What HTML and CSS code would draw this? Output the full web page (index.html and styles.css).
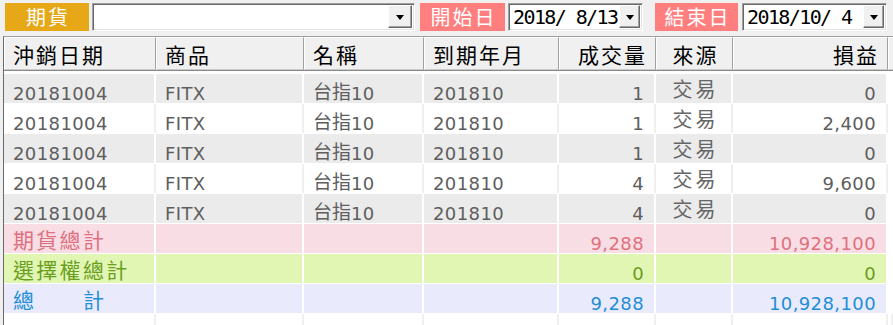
FILE: index.html
```html
<!DOCTYPE html>
<html lang="zh-Hant">
<head>
<meta charset="utf-8">
<title>期貨損益</title>
<link rel="stylesheet" href="styles.css">
</head>
<body>
<div class="toolbar">
  <span class="lbl lbl-orange">期貨</span>
  <div class="combo combo-product"><span class="combo-text"></span><span class="dd"></span></div>
  <span class="lbl lbl-red lbl-start">開始日</span>
  <div class="combo combo-date1"><span class="combo-text">2018/ 8/13</span><span class="dd dd-small"></span></div>
  <span class="lbl lbl-red lbl-end">結束日</span>
  <div class="combo combo-date2"><span class="combo-text">2018/10/ 4</span><span class="dd dd-small"></span></div>
</div>
<div class="grid">
  <div class="row head">
    <div class="c">沖銷日期</div>
    <div class="c">商品</div>
    <div class="c">名稱</div>
    <div class="c">到期年月</div>
    <div class="c r">成交量</div>
    <div class="c m">來源</div>
    <div class="c r">損益</div>
    <div class="c"></div>
  </div>
  <div class="body">
    <div class="row data odd">
      <div class="c">20181004</div><div class="c">FITX</div><div class="c"><span class="cj">台指</span>10</div><div class="c">201810</div><div class="c r">1</div><div class="c m src">交易</div><div class="c r">0</div><div class="c"></div>
    </div>
    <div class="row data even">
      <div class="c">20181004</div><div class="c">FITX</div><div class="c"><span class="cj">台指</span>10</div><div class="c">201810</div><div class="c r">1</div><div class="c m src">交易</div><div class="c r">2,400</div><div class="c"></div>
    </div>
    <div class="row data odd">
      <div class="c">20181004</div><div class="c">FITX</div><div class="c"><span class="cj">台指</span>10</div><div class="c">201810</div><div class="c r">1</div><div class="c m src">交易</div><div class="c r">0</div><div class="c"></div>
    </div>
    <div class="row data even">
      <div class="c">20181004</div><div class="c">FITX</div><div class="c"><span class="cj">台指</span>10</div><div class="c">201810</div><div class="c r">4</div><div class="c m src">交易</div><div class="c r">9,600</div><div class="c"></div>
    </div>
    <div class="row data odd">
      <div class="c">20181004</div><div class="c">FITX</div><div class="c"><span class="cj">台指</span>10</div><div class="c">201810</div><div class="c r">4</div><div class="c m src">交易</div><div class="c r">0</div><div class="c"></div>
    </div>
    <div class="row sum sum-fut">
      <div class="c lc">期貨總計</div><div class="c"></div><div class="c"></div><div class="c"></div><div class="c r">9,288</div><div class="c"></div><div class="c r">10,928,100</div><div class="c"></div>
    </div>
    <div class="row sum sum-opt">
      <div class="c lc">選擇權總計</div><div class="c"></div><div class="c"></div><div class="c"></div><div class="c r">0</div><div class="c"></div><div class="c r">0</div><div class="c"></div>
    </div>
    <div class="row sum sum-all">
      <div class="c lc">總　　計</div><div class="c"></div><div class="c"></div><div class="c"></div><div class="c r">9,288</div><div class="c"></div><div class="c r">10,928,100</div><div class="c"></div>
    </div>
    <div class="row filler">
      <div class="c"></div><div class="c"></div><div class="c"></div><div class="c"></div><div class="c"></div><div class="c"></div><div class="c"></div><div class="c"></div>
    </div>
  </div>
</div>
</body>
</html>
```
FILE: styles.css
```css
html, body {
  margin: 0;
  padding: 0;
}
body {
  width: 893px;
  height: 325px;
  overflow: hidden;
  background: #f0f0f0;
  font-family: "DejaVu Sans", "Noto Sans CJK TC", sans-serif;
}

/* ---------- toolbar ---------- */
.toolbar {
  display: flex;
  align-items: flex-start;
  height: 36px;
  box-sizing: border-box;
  padding: 3px 0 0 5px;
}
.lbl {
  display: flex;
  align-items: center;
  justify-content: center;
  height: 28px;
  color: #fff;
  font-family: "Noto Sans CJK TC", sans-serif;
  font-size: 20px;
  letter-spacing: 2px;
  line-height: 28px;
  padding-left: 2px;
  box-sizing: border-box;
}
.lbl-orange {
  width: 84px;
  background: #e6a817;
  margin-right: 3px;
}
.lbl-red {
  background: #ff7f7f;
}
.lbl-start {
  width: 85px;
  margin-left: 5px;
  margin-right: 3px;
}
.lbl-end {
  width: 83px;
  margin-left: 12px;
  margin-right: 4px;
}
.combo {
  display: flex;
  align-items: stretch;
  height: 28px;
  box-sizing: border-box;
  background: #fff;
  border: 1px solid;
  border-color: #a0a0a0 #fff #fff #a0a0a0;
  box-shadow: inset 1px 1px 0 #696969, inset -1px -1px 0 #e3e3e3;
  padding: 1px 2px 2px 1px;
}
.combo-product { width: 323px; }
.combo-date1 { width: 135px; }
.combo-date2 { width: 145px; }
.combo-text {
  flex: 1;
  font-family: "DejaVu Sans Mono", monospace;
  font-size: 20px;
  letter-spacing: -1.6px;
  line-height: 24px;
  padding-left: 3px;
  white-space: pre;
  color: #000;
}
.dd {
  width: 24px;
  box-sizing: border-box;
  background: #f0f0f0;
  border: 1px solid;
  border-color: #fff #696969 #696969 #fff;
  box-shadow: inset -1px -1px 0 #a0a0a0;
  display: flex;
  align-items: center;
  justify-content: center;
}
.dd-small { width: 21px; }
.dd::after {
  content: "";
  width: 0;
  height: 0;
  border-left: 4px solid transparent;
  border-right: 4px solid transparent;
  border-top: 5px solid #000;
  margin-top: 2px;
}

/* ---------- grid ---------- */
.grid {
  margin-left: 3px;
  border-left: 1px solid #6a6a6a;
  border-top: 1px solid #a0a0a0;
  background: #fff;
  height: 289px;
}
.row {
  display: grid;
  grid-template-columns: 152px 148px 120px 135px 97px 77px 155px 1fr;
}
.c {
  box-sizing: border-box;
  white-space: nowrap;
  overflow: hidden;
}
.c.r { text-align: right; }
.c.m { text-align: center; }

.head {
  height: 33px;
  border-bottom: 1px solid #8a8a8a;
  box-sizing: content-box;
}
.head .c {
  height: 33px;
  background: #f0f0f0;
  border-top: 1px solid #fff;
  border-left: 1px solid #fff;
  border-right: 1px solid #a0a0a0;
  border-bottom: 1px solid #c8c8c8;
  font-family: "Noto Sans CJK TC", sans-serif;
  font-size: 21px;
  letter-spacing: 2px;
  line-height: 24px;
  padding: 4px 0 0 8px;
  color: #000;
}
.head .c.r { padding: 4px 8px 0 0; }
.head .c.m { padding: 4px 0 0 2px; }

.body {
  padding-top: 3px;
  background: #fff;
}
.data, .sum {
  height: 30px;
  border-bottom: 1px solid #fff;
  box-sizing: border-box;
  font-size: 18px;
  letter-spacing: 0.4px;
}
.data .c, .sum .c {
  height: 29px;
  line-height: 19px;
  padding: 10px 0 0 9px;
  border-right: 2px solid #fff;
}
.data .c.r, .sum .c.r { padding: 10px 10px 0 0; }
.data .c { color: #5e5e5e; }
.data.odd .c { background: #ebebeb; }
.data.even .c { background: #fff; border-right-color: #f0f0f0; }
.data .c:last-child, .sum .c:last-child { background: #fff; }

.cj {
  font-family: "Noto Sans CJK TC", sans-serif;
  font-size: 19px;
  letter-spacing: 0;
  line-height: 0;
  vertical-align: 1px;
}
.data .c.src {
  font-family: "Noto Sans CJK TC", sans-serif;
  font-size: 20px;
  letter-spacing: 3px;
  line-height: 27px;
  padding: 1px 0 0 4px;
  color: #666;
}
.sum .c.lc {
  font-family: "Noto Sans CJK TC", sans-serif;
  font-size: 21px;
  letter-spacing: 2.3px;
  line-height: 27px;
  padding: 2px 0 0 9px;
}
.sum-fut .c { background: #f8dee4; color: #e0707f; }
.sum-opt .c { background: #e1f6b3; color: #6a9e1e; }
.sum-all .c { background: #e9ebfd; color: #1f8ed6; }

.filler .c {
  height: 12px;
  border-right: 2px solid #f0f0f0;
}
```
